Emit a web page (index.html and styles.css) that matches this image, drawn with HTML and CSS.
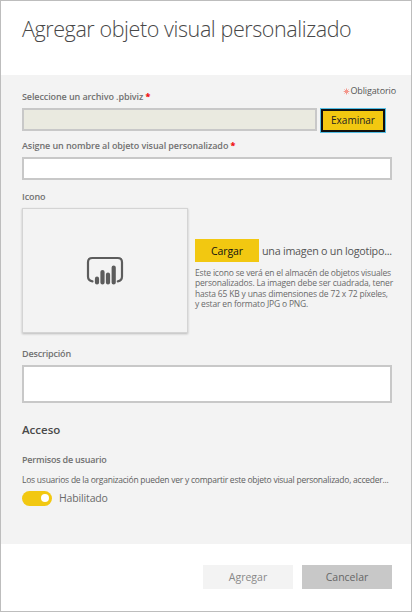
FILE: index.html
```html
<!DOCTYPE html>
<html lang="es">
<head>
<meta charset="utf-8">
<title>Agregar objeto visual personalizado</title>
<link rel="stylesheet" href="styles.css">
</head>
<body>
<main class="dialog">
  <header class="head"><h1>Agregar objeto visual personalizado</h1></header>
  <section class="content">
    <div class="row labels">
      <label class="label l-file">Seleccione un archivo .pbiviz <b class="req">*</b></label>
      <span class="mandatory"><svg width="7" height="7" viewBox="0 0 7 7"><path d="M3.5 .5v6M.7 3.5h5.6M1.5 1.5l4 4M5.5 1.5l-4 4"/></svg><span>Obligatorio</span></span>
    </div>
    <div class="row file">
      <div class="field disabled"></div>
      <button class="browse">Examinar</button>
    </div>
    <label class="label l-name">Asigne un nombre al objeto visual personalizado <b class="req">*</b></label>
    <div class="field name"></div>
    <div class="label l-icon">Icono</div>
    <div class="row icon-row">
      <div class="preview">
        <svg width="38" height="30" viewBox="0 0 38 30">
          <path class="frame" d="M6.5 25.3C3.6 24.8 2 23.2 2 20.5V6.2C2 3.5 3.6 2 6.3 2h25.4C34.4 2 36 3.5 36 6.2v14.3c0 2.7-1.5 4.3-4.2 4.8"/>
          <path class="bars" d="M11 22.7v3.8M16.5 16V26.5M22 18.5V26.5M27.7 11.5V26.5"/>
        </svg>
      </div>
      <div class="upload">
        <div class="row upload-line"><button class="load">Cargar</button><span class="or">una imagen o un logotipo...</span></div>
        <p class="help">Este icono se verá en el almacén de objetos visuales<br>personalizados. La imagen debe ser cuadrada, tener<br>hasta 65 KB y unas dimensiones de 72 x 72 píxeles,<br>y estar en formato JPG o PNG.</p>
      </div>
    </div>
    <div class="label l-desc">Descripción</div>
    <div class="field desc"></div>
    <h2>Acceso</h2>
    <div class="label l-perm">Permisos de usuario</div>
    <p class="info">Los usuarios de la organización pueden ver y compartir este objeto visual personalizado, acceder...</p>
    <div class="row toggle-row"><div class="toggle"></div><span class="on">Habilitado</span></div>
  </section>
  <footer class="foot">
    <button class="add">Agregar</button>
    <button class="cancel">Cancelar</button>
  </footer>
</main>
</body>
</html>
```
FILE: styles.css
```css
* { box-sizing: border-box; }
body { margin: 0; font-family: "Open Sans", "Noto Sans", sans-serif; color: #555; }
h1, h2, p { margin: 0; }
button { border: 0; padding: 0; font-family: inherit; }
.row { display: flex; }
.dialog { width: 412px; height: 612px; border: 1px solid #bdbdbd; background: #fff; white-space: nowrap; overflow: hidden; }
.head { height: 74px; padding: 13px 0 0 21px; }
h1 { font-size: 21.5px; line-height: 30px; font-weight: 320; color: #484848; letter-spacing: -.41px; }
.content { height: 469px; background: #f3f3f3; padding: 0 19px 0 21px; }
.label { display: block; font-size: 9px; line-height: 14px; font-weight: 600; color: #707070; }
.req { color: #f01414; }
.labels { height: 33px; justify-content: space-between; margin-right: -4px; }
.l-file { padding-top: 15px; letter-spacing: -.1px; }
.mandatory { display: flex; height: 14px; margin-top: 9px; font-size: 9px; line-height: 14px; letter-spacing: -.12px; align-items: center; }
.mandatory path { stroke: #f3978c; stroke-width: 1; }
.file { height: 24px; gap: 4px; }
.field { border: 2px solid #c8c8c8; background: #fff; }
.disabled { width: 295px; height: 23px; background: #eaeae0; }
.browse { width: 64px; height: 23px; margin-top: 1px; border: 2px solid #111; background: #f2c811; color: #222; font-size: 10px; box-shadow: 0 0 0 1px #55bfe5; line-height: 19px; }
.l-name { height: 25px; padding-top: 7px; letter-spacing: -.09px; }
.name { height: 23px; }
.l-icon { height: 28px; padding-top: 10px; letter-spacing: -.1px; }
.icon-row { height: 125px; }
.preview { flex: none; width: 166px; height: 125px; border: 1px solid #d4d4d4; box-shadow: 0 1px 2px #bbb; display: flex; align-items: center; justify-content: center; }
.preview svg { fill: none; stroke: #5c5c5c; stroke-linecap: round; }
.frame { stroke-width: 2.2; }
.bars { stroke-width: 4.2; }
.upload { padding: 31px 0 0 7px; }
.upload-line { height: 24px; }
.load { flex: none; width: 64px; height: 23px; background: #f2c811; color: #111; font-size: 10.5px; line-height: 22px; letter-spacing: -.1px; }
.or { margin-left: 3px; font-size: 10.75px; line-height: 24px; letter-spacing: -.25px; }
.help { font-size: 8.5px; line-height: 10.4px; padding-top: 5px; color: #6a6a6a; letter-spacing: -.18px; }
.l-desc { height: 32px; padding-top: 14px; letter-spacing: -.17px; }
.desc { height: 38px; }
h2 { height: 50px; padding-top: 18px; font-size: 11.5px; line-height: 18px; font-weight: 600; color: #4a4a4a; }
.l-perm { height: 20px; letter-spacing: -.2px; }
.info { height: 17px; font-size: 8.5px; line-height: 14px; color: #606060; letter-spacing: -.24px; }
.toggle-row { align-items: center; height: 16px; gap: 7px; }
.toggle { width: 30px; height: 15px; border-radius: 8px; background: #f2c811; padding: 3.5px 0 0 19px; }
.toggle::after { content: ""; display: block; width: 8px; height: 8px; border-radius: 50%; background: #fff; }
.on { font-size: 10.5px; line-height: 16px; color: #6a6a6a; letter-spacing: -.15px; }
.foot { display: flex; gap: 9px; justify-content: flex-end; padding: 21px 19px 0 0; }
.foot button { width: 90px; height: 24px; font-size: 10.5px; line-height: 24px; }
.foot .add { background: #f3f3f3; color: #888; }
.foot .cancel { background: #c8c8c8; color: #666; }
```
